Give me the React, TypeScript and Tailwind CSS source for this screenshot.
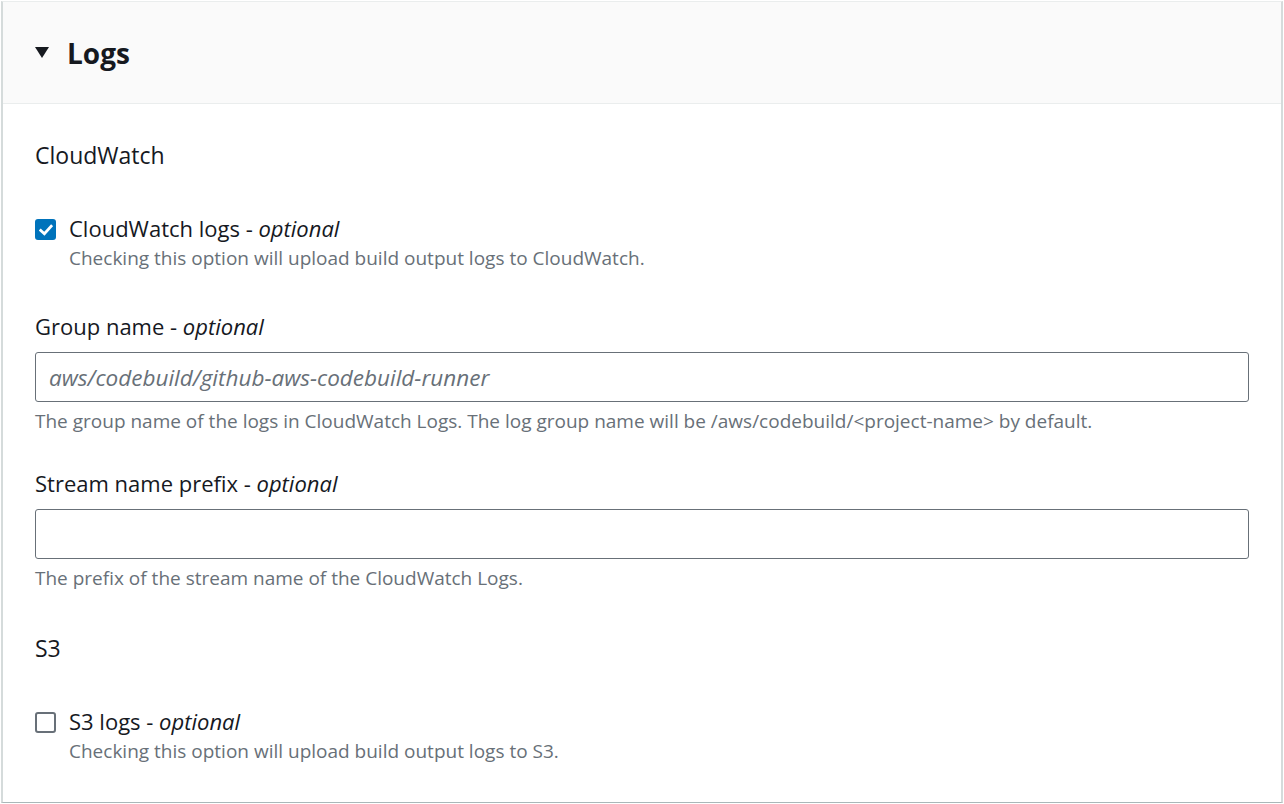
import { useState } from "react";

function Checkbox({ checked, onChange }: { checked: boolean; onChange: () => void }) {
  return (
    <button
      type="button"
      onClick={onChange}
      className={`flex h-[21px] w-[21px] shrink-0 items-center justify-center rounded-[3px] ${
        checked ? "bg-[#0073bb]" : "border-2 border-[#687078] bg-white"
      }`}
    >
      {checked && (
        <svg width="14" height="12" viewBox="0 0 14 12" fill="none">
          <path d="M1.8 6.4 5.4 9.8 12.2 2.2" stroke="white" strokeWidth="2.8" strokeLinecap="square" />
        </svg>
      )}
    </button>
  );
}

function CheckRow({
  label,
  hint,
  checked,
  onChange,
}: {
  label: string;
  hint: string;
  checked: boolean;
  onChange: () => void;
}) {
  return (
    <div className="flex gap-[13px]">
      <div className="pt-[8px]">
        <Checkbox checked={checked} onChange={onChange} />
      </div>
      <div>
        <div className="text-[22px] leading-[34px] text-[#16191f]">
          {label} - <i>optional</i>
        </div>
        <div className="mt-px text-[19px] leading-[24px] text-[#687078]">{hint}</div>
      </div>
    </div>
  );
}

function TextField({
  label,
  placeholder,
  hint,
}: {
  label: string;
  placeholder?: string;
  hint: string;
}) {
  return (
    <div>
      <div className="text-[22px] leading-[30px] text-[#16191f]">
        {label} - <i>optional</i>
      </div>
      <input
        className="mt-[11px] block h-[50px] w-full rounded-[3px] border border-[#687078] px-[13px] text-[22.5px] text-[#16191f] outline-none placeholder:italic placeholder:text-[#687078]"
        placeholder={placeholder}
      />
      <div className="mt-[7px] text-[19px] leading-[24px] text-[#687078]">{hint}</div>
    </div>
  );
}

export default function App() {
  const [cw, setCw] = useState(true);
  const [s3, setS3] = useState(false);

  return (
    <div className="h-[804px] bg-white px-px pt-px" style={{ fontFamily: '"Open Sans", "Noto Sans", sans-serif' }}>
      <div className="flex h-[802px] flex-col border-y border-l-2 border-r-2 border-t-[#eaeded] border-b-[#aab7b8] border-l-[#d5dbdb] border-r-[#d5dbdb]">
        <div className="flex h-[102px] items-center gap-[18px] border-b border-[#eaeded] bg-[#fafafa] pl-[32px]">
          <svg width="14" height="11" viewBox="0 0 14 11">
            <path d="M0 0h14L7 11z" fill="#16191f" />
          </svg>
          <h2 className="text-[28px] font-bold text-[#16191f]">Logs</h2>
        </div>

        <div className="px-[32px] pt-[34px]">
          <div className="text-[23px] leading-[34px] text-[#16191f]">CloudWatch</div>

          <div className="mt-[39px]">
            <CheckRow
              label="CloudWatch logs"
              hint="Checking this option will upload build output logs to CloudWatch."
              checked={cw}
              onChange={() => setCw(!cw)}
            />
          </div>

          <div className="mt-[41px]">
            <TextField
              label="Group name"
              placeholder="aws/codebuild/github-aws-codebuild-runner"
              hint="The group name of the logs in CloudWatch Logs. The log group name will be /aws/codebuild/<project-name> by default."
            />
          </div>

          <div className="mt-[35px]">
            <TextField label="Stream name prefix" hint="The prefix of the stream name of the CloudWatch Logs." />
          </div>

          <div className="mt-[41px] text-[23px] leading-[34px] text-[#16191f]">S3</div>

          <div className="mt-[39px]">
            <CheckRow
              label="S3 logs"
              hint="Checking this option will upload build output logs to S3."
              checked={s3}
              onChange={() => setS3(!s3)}
            />
          </div>
        </div>
      </div>
    </div>
  );
}
